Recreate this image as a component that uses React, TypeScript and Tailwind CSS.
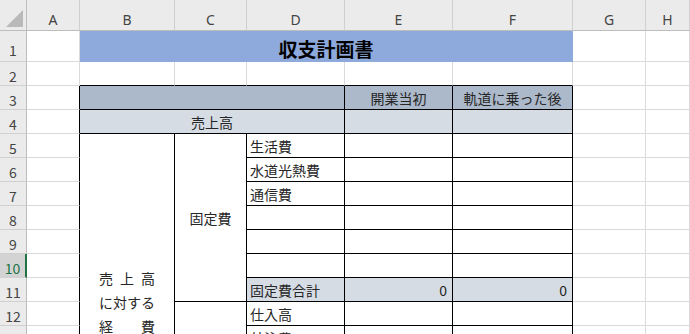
import React from 'react';

const FONT = { fontFamily: '"Noto Sans CJK JP", "Noto Sans", sans-serif' };

const grid = 'border-r border-b border-[#dadada]';
const box = 'border-r border-b border-black';

const Cell = ({ className = '', children }: { className?: string; children?: React.ReactNode }) => (
  <div className={`flex items-center overflow-hidden whitespace-nowrap pt-[2px] text-[14px] text-[#262626] ${className}`}>
    {children}
  </div>
);

const RowHead = ({ n, tall = false }: { n: number; tall?: boolean }) => {
  const sel = n === 10;
  return (
    <div
      className={`flex items-center justify-center border-b border-[#d0d0d0] text-[14px] ${tall ? 'pt-[8px]' : 'pt-[5px]'} ${
        sel ? 'bg-[#d3d3d3] text-[#217346] border-r-2 border-r-[#217346]' : 'bg-[#ebebeb] text-[#444] border-r border-r-[#bdbdbd]'
      }`}
    >
      {n}
    </div>
  );
};

const Spread = ({ chars }: { chars: string[] }) => (
  <div className="flex h-[24px] w-[56px] items-center justify-between">
    {chars.map((c, i) => (
      <span key={i}>{c}</span>
    ))}
  </div>
);

// columns G and H, plain gridlines
const Tail = () => (
  <>
    <Cell className={grid} />
    <Cell className={grid} />
  </>
);

export default function App() {
  const cols = ['A', 'B', 'C', 'D', 'E', 'F', 'G', 'H'];
  const fixed = ['生活費', '水道光熱費', '通信費', '', '', ''];

  return (
    <div className="h-[334px] w-[690px] overflow-hidden bg-white" style={FONT}>
      <div className="grid grid-cols-[27px_53px_95px_72px_98px_108px_120px_73px_1fr] grid-rows-[31px_31px] auto-rows-[24px]">
        {/* column headers */}
        <div className="relative border-r border-b border-[#bdbdbd] bg-[#ebebeb]">
          <svg className="absolute right-[3px] bottom-[3px]" width="17" height="17" viewBox="0 0 17 17">
            <polygon points="17,0 17,17 0,17" fill="#b9b9b9" />
          </svg>
        </div>
        {cols.map((c) => (
          <div
            key={c}
            className="flex items-center justify-center border-r border-b border-r-[#d0d0d0] border-b-[#bdbdbd] bg-[#ebebeb] pt-[8px] text-[14px] text-[#444]"
            style={{ fontFamily: '"Noto Sans", sans-serif' }}
          >
            {c}
          </div>
        ))}

        {/* row 1 */}
        <RowHead n={1} tall />
        <Cell className={grid} />
        <Cell className="col-span-5 justify-center border-r border-b border-[#8ea9db] bg-[#8ea9db] pt-[6px] text-[19px] font-bold text-black">
          収支計画書
        </Cell>
        <Tail />

        {/* row 2 */}
        <RowHead n={2} />
        <Cell className={grid} />
        {[0, 1, 2, 3, 4].map((i) => (
          <Cell key={i} className="border-r border-b border-r-[#dadada] border-b-black" />
        ))}
        <Tail />

        {/* row 3 */}
        <RowHead n={3} />
        <Cell className="border-r border-b border-r-black border-b-[#dadada]" />
        <Cell className={`col-span-3 bg-[#acb9ca] ${box}`} />
        <Cell className={`justify-center bg-[#acb9ca] ${box}`}>開業当初</Cell>
        <Cell className={`justify-center bg-[#acb9ca] ${box}`}>軌道に乗った後</Cell>
        <Tail />

        {/* row 4 */}
        <RowHead n={4} />
        <Cell className="border-r border-b border-r-black border-b-[#dadada]" />
        <Cell className={`col-span-3 justify-center bg-[#d6dce4] ${box}`}>売上高</Cell>
        <Cell className={`bg-[#d6dce4] ${box}`} />
        <Cell className={`bg-[#d6dce4] ${box}`} />
        <Tail />

        {/* rows 5 - 10 */}
        {fixed.map((label, i) => (
          <React.Fragment key={i}>
            <RowHead n={5 + i} />
            <Cell className="border-r border-b border-r-black border-b-[#dadada]" />
            {i === 0 && (
              <>
                <Cell className={`row-span-14 flex-col justify-center pt-0 ${box}`}>
                  <Spread chars={['売', '上', '高']} />
                  <Spread chars={['に', '対', 'す', 'る']} />
                  <Spread chars={['経', '費']} />
                </Cell>
                <Cell className={`row-span-7 justify-center ${box}`}>固定費</Cell>
              </>
            )}
            <Cell className={`pl-[3px] ${box}`}>{label}</Cell>
            <Cell className={box} />
            <Cell className={box} />
            <Tail />
          </React.Fragment>
        ))}

        {/* row 11 */}
        <RowHead n={11} />
        <Cell className="border-r border-b border-r-black border-b-[#dadada]" />
        <Cell className={`bg-[#d6dce4] pl-[3px] ${box}`}>固定費合計</Cell>
        <Cell className={`justify-end bg-[#d6dce4] pr-[5px] ${box}`}>0</Cell>
        <Cell className={`justify-end bg-[#d6dce4] pr-[5px] ${box}`}>0</Cell>
        <Tail />

        {/* row 12 */}
        <RowHead n={12} />
        <Cell className="border-r border-b border-r-black border-b-[#dadada]" />
        <Cell className={`row-span-6 ${box}`} />
        <Cell className={`pl-[3px] ${box}`}>仕入高</Cell>
        <Cell className={box} />
        <Cell className={box} />
        <Tail />

        {/* row 13 */}
        <RowHead n={13} />
        <Cell className="border-r border-b border-r-black border-b-[#dadada]" />
        <Cell className={`pl-[3px] ${box}`}>外注費</Cell>
        <Cell className={box} />
        <Cell className={box} />
        <Tail />
      </div>
    </div>
  );
}
